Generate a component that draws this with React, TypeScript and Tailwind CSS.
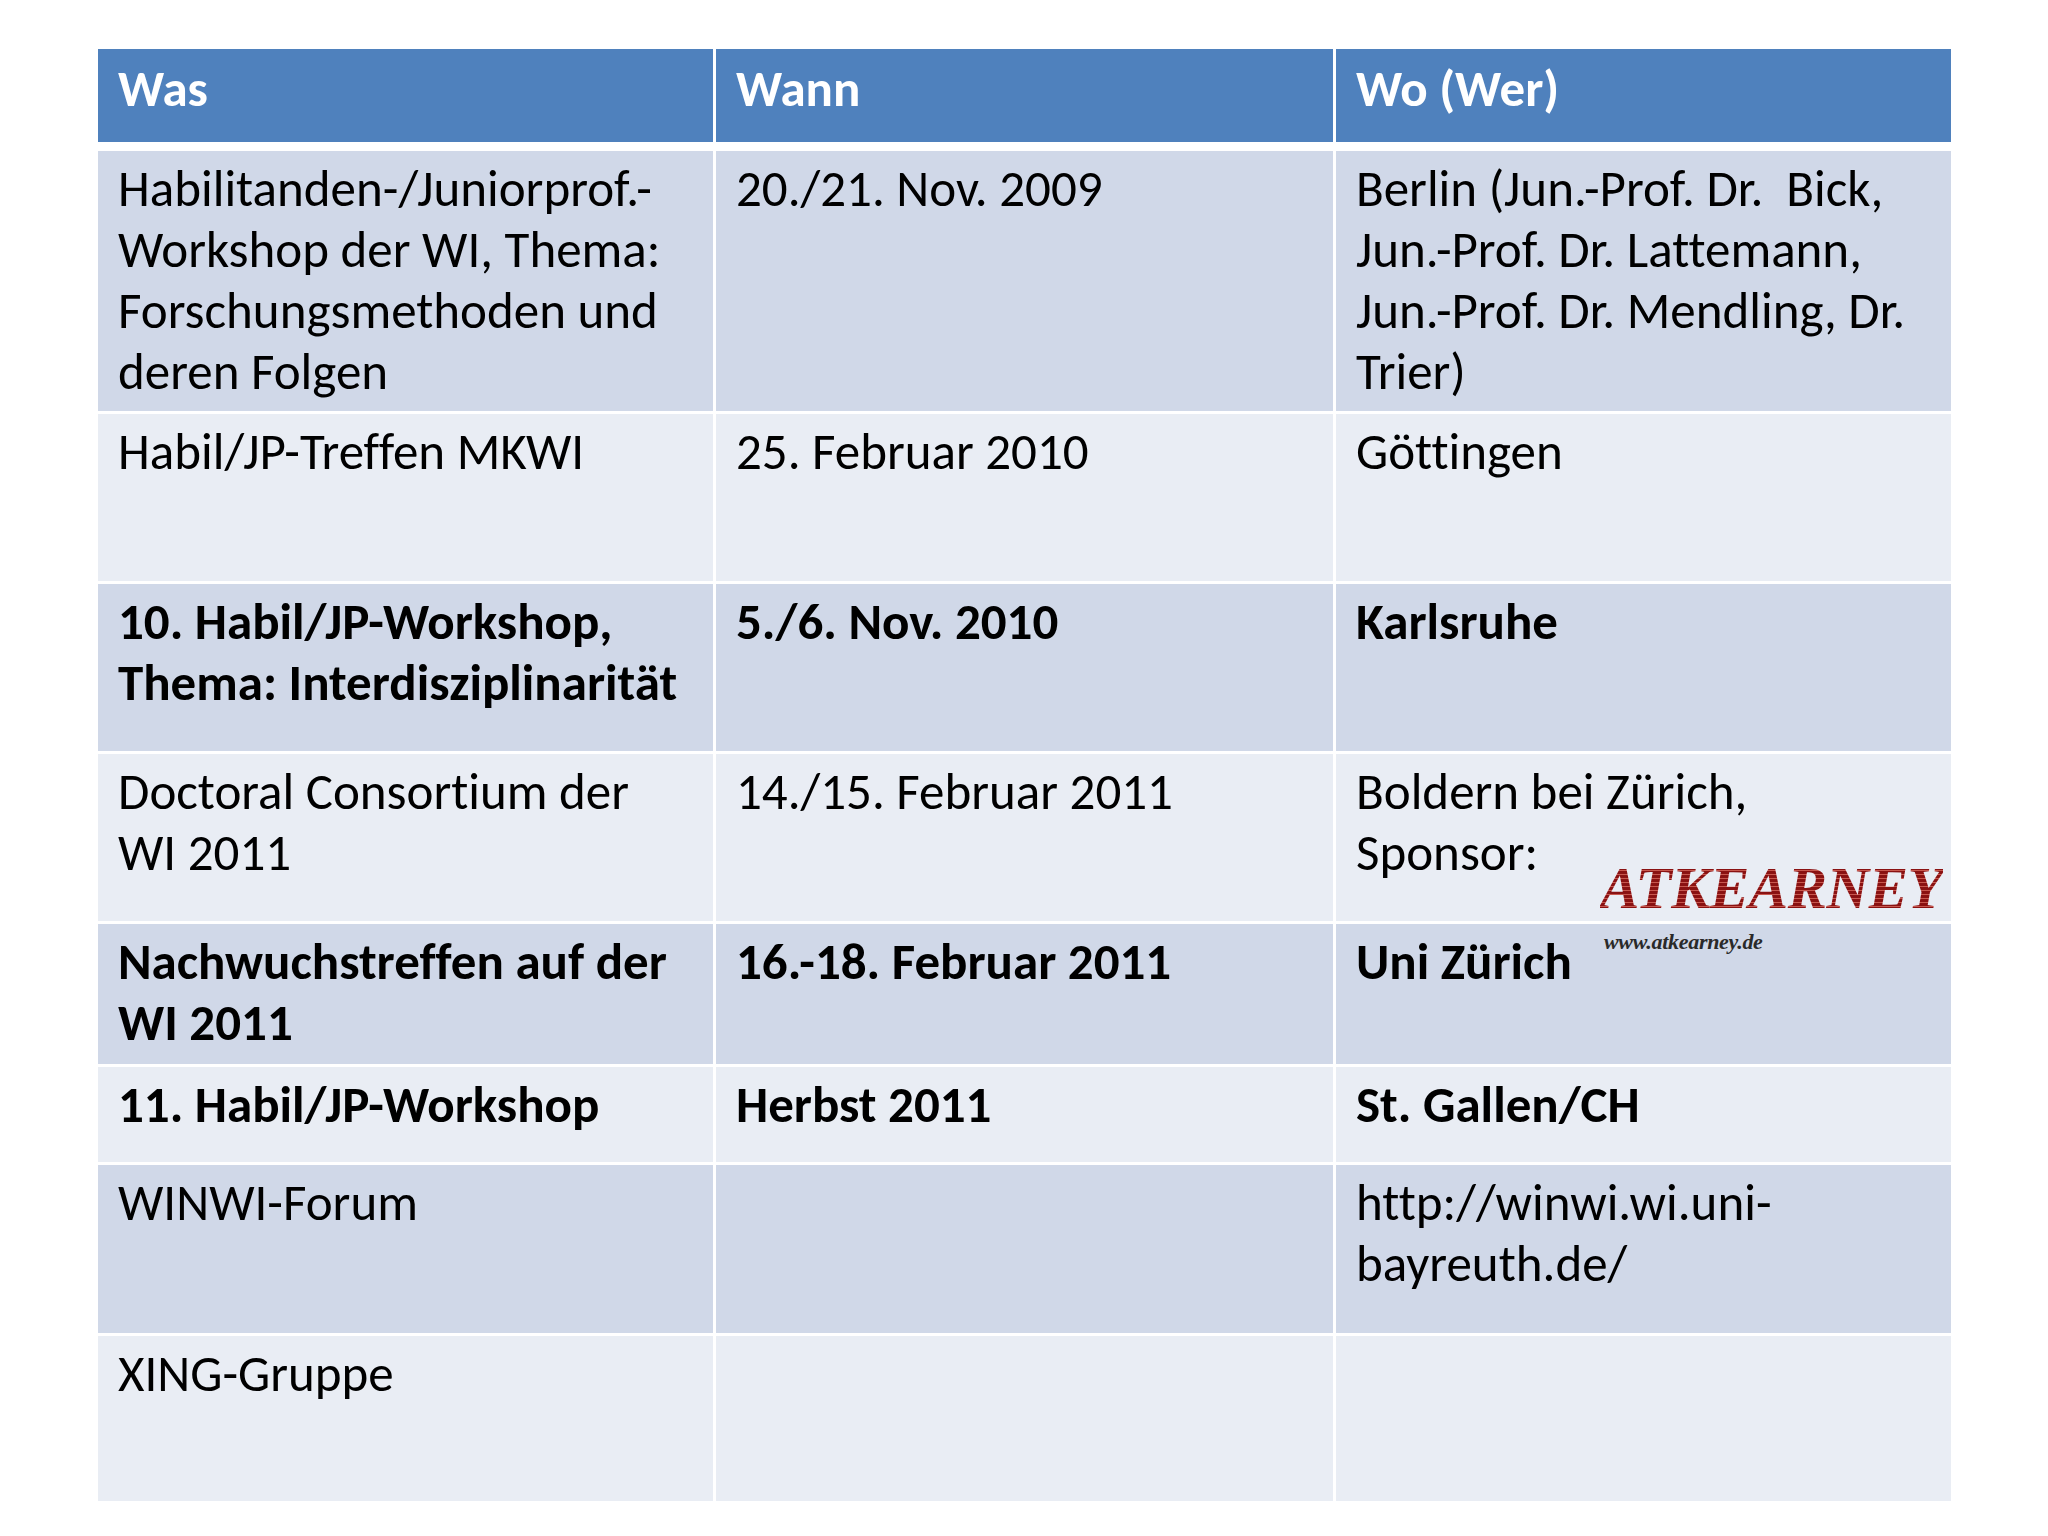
import React from "react";

type Cell = { lines: string[]; bold?: boolean };
type Row = { h: string; bg: string; cells: Cell[] };

const ODD = "bg-[#d0d8e8]";
const EVEN = "bg-[#e9edf4]";

const rows: Row[] = [
  {
    h: "h-[260px]",
    bg: ODD,
    cells: [
      { lines: ["Habilitanden-/Juniorprof.-", "Workshop der WI, Thema:", "Forschungsmethoden und", "deren Folgen"] },
      { lines: ["20./21. Nov. 2009"] },
      { lines: ["Berlin (Jun.-Prof. Dr.  Bick,", "Jun.-Prof. Dr. Lattemann,", "Jun.-Prof. Dr. Mendling, Dr.", "Trier)"] },
    ],
  },
  {
    h: "h-[167px]",
    bg: EVEN,
    cells: [{ lines: ["Habil/JP-Treffen MKWI"] }, { lines: ["25. Februar 2010"] }, { lines: ["Göttingen"] }],
  },
  {
    h: "h-[167px]",
    bg: ODD,
    cells: [
      { lines: ["10. Habil/JP-Workshop,", "Thema: Interdisziplinarität"], bold: true },
      { lines: ["5./6. Nov. 2010"], bold: true },
      { lines: ["Karlsruhe"], bold: true },
    ],
  },
  {
    h: "h-[167px]",
    bg: EVEN,
    cells: [
      { lines: ["Doctoral Consortium der", "WI 2011"] },
      { lines: ["14./15. Februar 2011"] },
      { lines: ["Boldern bei Zürich,", "Sponsor:"] },
    ],
  },
  {
    h: "h-[140px]",
    bg: ODD,
    cells: [
      { lines: ["Nachwuchstreffen auf der", "WI 2011"], bold: true },
      { lines: ["16.-18. Februar 2011"], bold: true },
      { lines: ["Uni Zürich"], bold: true },
    ],
  },
  {
    h: "h-[95px]",
    bg: EVEN,
    cells: [
      { lines: ["11. Habil/JP-Workshop"], bold: true },
      { lines: ["Herbst 2011"], bold: true },
      { lines: ["St. Gallen/CH"], bold: true },
    ],
  },
  {
    h: "h-[168px]",
    bg: ODD,
    cells: [{ lines: ["WINWI-Forum"] }, { lines: [] }, { lines: ["http://winwi.wi.uni-", "bayreuth.de/"] }],
  },
  {
    h: "h-[165px]",
    bg: EVEN,
    cells: [{ lines: ["XING-Gruppe"] }, { lines: [] }, { lines: [] }],
  },
];

function Logo() {
  return (
    <div className="absolute left-[264px] top-[105px] z-10 pointer-events-none">
      <div className="font-['Liberation_Serif','Times_New_Roman',serif] font-bold italic text-[59px] leading-none tracking-[-0.5px] whitespace-nowrap bg-[repeating-linear-gradient(180deg,#8a1212_0px,#8a1212_3px,#c8584f_3px,#c8584f_4px)] bg-clip-text text-transparent">
        ATKEARNEY
      </div>
      <div className="mt-[13px] ml-[4px] font-['Liberation_Serif','Times_New_Roman',serif] italic font-bold text-[22px] leading-none tracking-[-0.3px] text-[#2a2a2a] whitespace-nowrap">
        www.atkearney.de
      </div>
    </div>
  );
}

export default function App() {
  return (
    <div className="w-[2048px] h-[1536px] bg-white overflow-hidden font-['Carlito','Lato',sans-serif] text-black [font-variant-ligatures:none]">
      <div className="ml-[98px] pt-[49px] w-[1853px]">
        <div className="grid grid-cols-[615px_617px_615px] gap-x-[3px] h-[93px]">
          {["Was", "Wann", "Wo (Wer)"].map((t) => (
            <div key={t} className="bg-[#4f81bd] text-white font-bold text-[51px] leading-[61px] pl-[20px] pt-[9px]">
              {t}
            </div>
          ))}
        </div>
        <div className="mt-[9px] flex flex-col gap-y-[3px]">
          {rows.map((r, i) => (
            <div key={i} className={`grid grid-cols-[615px_617px_615px] gap-x-[3px] ${r.h}`}>
              {r.cells.map((c, j) => (
                <div
                  key={j}
                  className={`${r.bg} ${c.bold ? "font-bold" : "font-normal"} text-[51px] leading-[61px] pl-[20px] pt-[7px] whitespace-pre ${
                    i === 3 && j === 2 ? "relative" : ""
                  }`}
                >
                  {c.lines.map((l, k) => (
                    <div key={k}>{l}</div>
                  ))}
                  {i === 3 && j === 2 ? <Logo /> : null}
                </div>
              ))}
            </div>
          ))}
        </div>
      </div>
    </div>
  );
}
